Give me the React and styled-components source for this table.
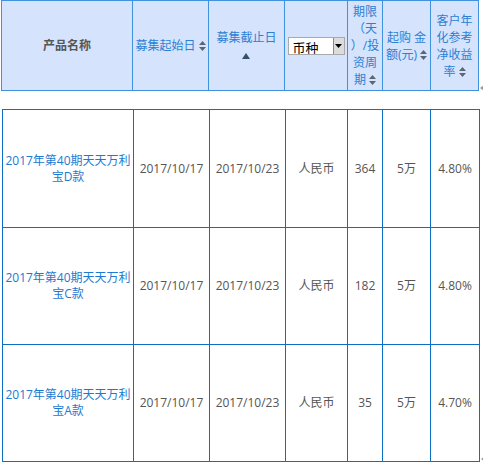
import React from 'react'
import styled, { createGlobalStyle } from 'styled-components'

const GlobalStyle = createGlobalStyle`
  body {
    margin: 0;
    background: #fff;
    font-family: "Open Sans", "Noto Sans CJK SC", sans-serif;
    font-size: 12px;
  }
`

const products = [
  { name: '2017年第40期天天万利', suffix: '宝D款', start: '2017/10/17', end: '2017/10/23', currency: '人民币', days: '364', min: '5万', rate: '4.80%', height: 117 },
  { name: '2017年第40期天天万利', suffix: '宝C款', start: '2017/10/17', end: '2017/10/23', currency: '人民币', days: '182', min: '5万', rate: '4.80%', height: 116 },
  { name: '2017年第40期天天万利', suffix: '宝A款', start: '2017/10/17', end: '2017/10/23', currency: '人民币', days: '35', min: '5万', rate: '4.70%', height: 116 },
]

const SortIcon = () => (
  <SortSvg width="7" height="10" viewBox="0 0 7 10">
    <path d="M3.5 0 L7 4 L0 4 Z" fill="#5b6673" />
    <path d="M0 6 L7 6 L3.5 10 Z" fill="#5b6673" />
  </SortSvg>
)

const App = () => {
  return (
    <>
      <GlobalStyle />
      <Page>
        <Band>
          <HeadGrid>
            <HeadCell>
              <Title>产品名称</Title>
            </HeadCell>
            <HeadCell>
              <Link>募集起始日 <SortIcon /></Link>
            </HeadCell>
            <HeadCell>
              <Link>
                募集截止日
                <br />
                <svg width="8" height="6" viewBox="0 0 8 6">
                  <path d="M4 0 L8 6 L0 6 Z" fill="#34506c" />
                </svg>
              </Link>
            </HeadCell>
            <HeadCell>
              <SelectBox>
                <Select defaultValue="">
                  <option value="">币种</option>
                  <option value="cny">人民币</option>
                  <option value="usd">美元</option>
                </Select>
                <DropButton>
                  <svg width="7" height="4" viewBox="0 0 7 4">
                    <path d="M0 0 L7 0 L3.5 4 Z" fill="#000" />
                  </svg>
                </DropButton>
              </SelectBox>
            </HeadCell>
            <HeadCell>
              <Link>
                期限
                <br />（天
                <br />）/投
                <br />资周
                <br />期 <SortIcon />
              </Link>
            </HeadCell>
            <HeadCell>
              <Link>
                起购 金
                <br />额(元) <SortIcon />
              </Link>
            </HeadCell>
            <HeadCell>
              <Link>
                客户年
                <br />化参考
                <br />净收益
                <br />率 <SortIcon />
              </Link>
            </HeadCell>
          </HeadGrid>
          <Marker />
        </Band>

        <Band $top={18}>
          <BodyGrid>
            {products.map((p, i) => (
              <React.Fragment key={i}>
                <Cell $h={p.height}>
                  <ProductLink>
                    {p.name}
                    <br />
                    {p.suffix}
                  </ProductLink>
                </Cell>
                <Cell $h={p.height}>{p.start}</Cell>
                <Cell $h={p.height}>{p.end}</Cell>
                <Cell $h={p.height}>{p.currency}</Cell>
                <Cell $h={p.height}>{p.days}</Cell>
                <Cell $h={p.height}>{p.min}</Cell>
                <Cell $h={p.height}>{p.rate}</Cell>
              </React.Fragment>
            ))}
          </BodyGrid>
          <Marker />
        </Band>
      </Page>
    </>
  )
}

export default App

const Page = styled.div`
  padding-left: 1px;
`

const Band = styled.div`
  display: flex;
  align-items: flex-end;
  margin-top: ${(p) => p.$top || 0}px;
`

const HeadGrid = styled.div`
  display: grid;
  grid-template-columns: 130px 75px 75px 62px 34px 47px 47px;
  grid-template-rows: 89px;
  gap: 1px;
  padding: 1px;
  background: #3f92de;
  flex-shrink: 0;
`

const HeadCell = styled.div`
  background: #d5e3fc;
  display: flex;
  align-items: center;
  justify-content: center;
  text-align: center;
  line-height: 17px;
`

const Title = styled.span`
  font-weight: bold;
  color: #555;
`

const Link = styled.span`
  color: #2b80d4;
  cursor: pointer;
`

const SortSvg = styled.svg`
  vertical-align: -1px;
`

const SelectBox = styled.div`
  display: flex;
  width: 57px;
  height: 18px;
  box-sizing: border-box;
  border: 1px solid #a9a9a9;
  background: #fff;
`

const Select = styled.select`
  appearance: none;
  border: none;
  outline: none;
  background: transparent;
  flex: 1;
  min-width: 0;
  padding: 0 0 0 4px;
  font-family: "Noto Sans CJK SC", sans-serif;
  font-size: 13px;
  color: #000;
`

const DropButton = styled.span`
  width: 10px;
  display: flex;
  align-items: center;
  justify-content: center;
  background: #dcdcdc;
  border-left: 1px solid #8a8a8a;
`

const Marker = styled.span`
  flex-shrink: 0;
  width: 0;
  height: 0;
  margin: 0 0 0 1px;
  border-top: 3px solid transparent;
  border-bottom: 3px solid transparent;
  border-right: 4px solid #9a9a9a;
`

const BodyGrid = styled.div`
  margin-left: 1px;
  display: grid;
  grid-template-columns: 130px 75px 75px 61px 34px 47px 48px;
  gap: 1px;
  padding: 1px;
  background: #0c6fc4;
  flex-shrink: 0;
`

const Cell = styled.div`
  height: ${(p) => p.$h}px;
  background: #fff;
  display: flex;
  align-items: center;
  justify-content: center;
  text-align: center;
  color: #555;
  line-height: 16px;
`

const ProductLink = styled.span`
  color: #1c7ad0;
  cursor: pointer;
`
